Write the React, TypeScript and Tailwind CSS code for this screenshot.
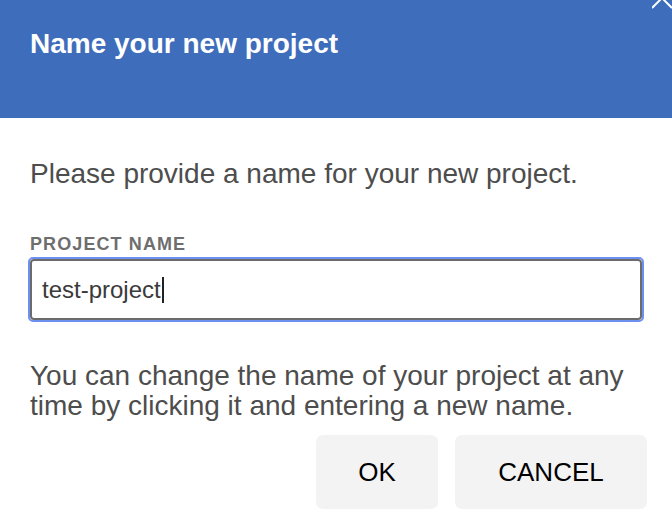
import React from "react";

export default function App() {
  return (
    <div
      className="relative w-[672px] h-[527px] overflow-hidden bg-white"
      style={{ fontFamily: '"Liberation Sans", Arial, sans-serif' }}
    >
      <svg
        className="absolute right-0 top-0"
        width="20"
        height="10"
        viewBox="0 0 20 10"
        fill="none"
      >
        <path d="M0 8 L10 -2 L20 8" stroke="white" strokeWidth="2" />
      </svg>
      <div className="h-[118px] bg-[#3e6dbb] px-[30px] pt-[28px]">
        <h1 className="text-[28px] leading-[32px] font-bold text-white">
          Name your new project
        </h1>
      </div>
      <div className="px-[30px] pt-[40px]">
        <p className="text-[28px] leading-[32px] text-[#4d4d4d]">
          Please provide a name for your new project.
        </p>
        <div className="mt-[44px] text-[18px] leading-[20px] font-bold text-[#6e6e6e] tracking-[1.1px]">
          PROJECT NAME
        </div>
        <div className="mt-[3px] -mx-[2px] h-[65px] rounded-[5px] border-2 border-[#6d8ff0] p-0">
          <div className="h-full rounded-[4px] border-2 border-[#6b6b6b] flex items-center pl-[10px]">
            <span className="text-[24px] leading-[28px] text-[#3a3a3a]">test-project</span>
            <span className="ml-[1px] w-[2px] h-[26px] bg-[#222]" />
          </div>
        </div>
        <p className="mt-[39px] text-[28px] leading-[30px] text-[#4d4d4d]">
          You can change the name of your project at any time by clicking it and entering a new name.
        </p>
        <div className="mt-[14px] flex justify-end gap-[17px] mr-[-5px]">
          <button className="w-[122px] h-[74px] rounded-[7px] bg-[#f3f3f3] text-[26px] text-black">
            OK
          </button>
          <button className="w-[192px] h-[74px] rounded-[7px] bg-[#f3f3f3] text-[26px] text-black">
            CANCEL
          </button>
        </div>
      </div>
    </div>
  );
}
